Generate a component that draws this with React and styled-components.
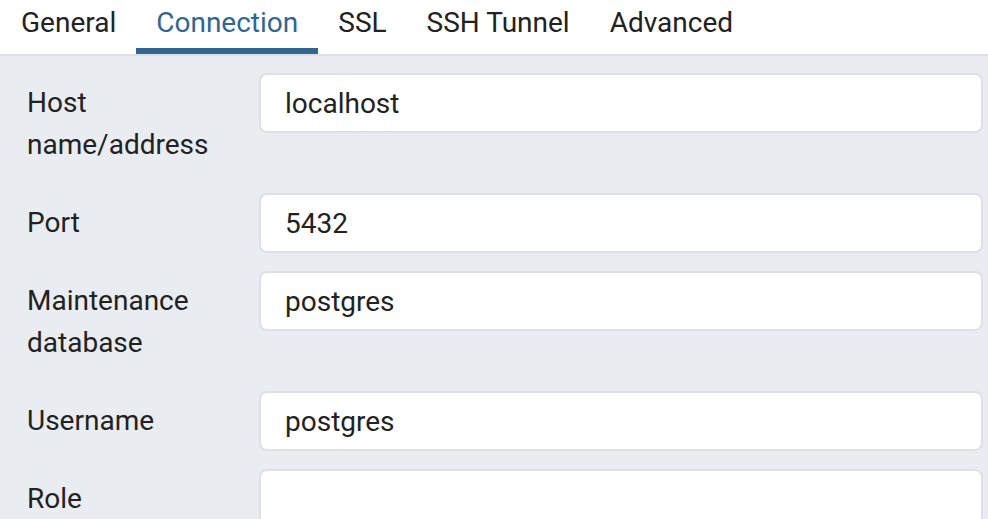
import React from "react";
import styled, { createGlobalStyle } from "styled-components";

const Global = createGlobalStyle`
  html, body { margin: 0; padding: 0; background: #e9ecf1; }
  body { font-family: Roboto, "Noto Sans", sans-serif; color: #222; }
  * { box-sizing: border-box; }
`;

const Page = styled.div`
  width: 988px;
  height: 519px;
  overflow: hidden;
  display: flex;
  flex-direction: column;
  background: #e9ecf1;
`;

const TabBar = styled.div`
  display: flex;
  background: #ffffff;
  border-bottom: 2px solid #dde1e7;
  height: 56px;
  padding-left: 1px;
`;

const Tab = styled.div`
  padding: 7px 20px 10px;
  height: 54px;
  display: flex;
  align-items: center;
  font-size: 28px;
  color: ${(p) => (p.$active ? "#326690" : "#222")};
  border-bottom: 6px solid ${(p) => (p.$active ? "#326690" : "transparent")};
`;

const Form = styled.div`
  display: flex;
  flex-direction: column;
  gap: 18px;
  padding: 17px 5px 0 27px;
`;

const Row = styled.div`
  display: grid;
  grid-template-columns: 232px 1fr;
  align-items: start;
`;

const Label = styled.div`
  font-size: 28px;
  line-height: 42px;
  padding: 9px 0;
`;

const Input = styled.div`
  height: 60px;
  background: #fff;
  border: 2px solid #dde0e6;
  border-radius: 8px;
  padding: 0 24px;
  display: flex;
  align-items: center;
  font-size: 28px;
  color: #222;
`;

const tabs = ["General", "Connection", "SSL", "SSH Tunnel", "Advanced"];
const fields = [
  ["Host", "name/address", "localhost"],
  ["Port", null, "5432"],
  ["Maintenance", "database", "postgres"],
  ["Username", null, "postgres"],
  ["Role", null, ""],
];

export default function App() {
  return (
    <>
      <Global />
      <Page>
        <TabBar>
          {tabs.map((t) => (
            <Tab key={t} $active={t === "Connection"}>{t}</Tab>
          ))}
        </TabBar>
        <Form>
          {fields.map(([a, b, v]) => (
            <Row key={a}>
              <Label>
                {a}
                {b && <br />}
                {b}
              </Label>
              <Input>{v}</Input>
            </Row>
          ))}
        </Form>
      </Page>
    </>
  );
}
